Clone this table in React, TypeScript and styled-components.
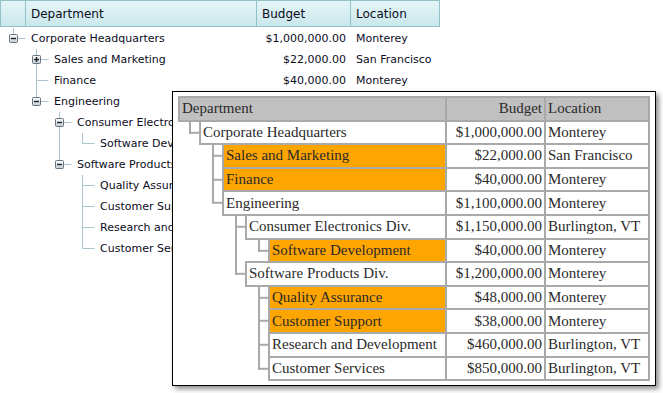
import React from "react";
import styled, { createGlobalStyle } from "styled-components";

const GlobalStyle = createGlobalStyle`
  html, body {
    margin: 0;
    padding: 0;
    background: #ffffff;
  }
  body {
    width: 663px;
    height: 393px;
    overflow: hidden;
    font-family: "DejaVu Sans", Verdana, sans-serif;
  }
`;

type Guide = "none" | "pass" | "tee" | "elbow";

interface Dept {
  name: string;
  budget: string;
  location: string;
  level: number;
  guides: Guide[];
  expander?: "plus" | "minus";
  highlight?: boolean;
}

const rows: Dept[] = [
  { name: "Corporate Headquarters", budget: "$1,000,000.00", location: "Monterey", level: 0, guides: ["elbow"], expander: "minus" },
  { name: "Sales and Marketing", budget: "$22,000.00", location: "San Francisco", level: 1, guides: ["none", "tee"], expander: "plus", highlight: true },
  { name: "Finance", budget: "$40,000.00", location: "Monterey", level: 1, guides: ["none", "tee"], highlight: true },
  { name: "Engineering", budget: "$1,100,000.00", location: "Monterey", level: 1, guides: ["none", "elbow"], expander: "minus" },
  { name: "Consumer Electronics Div.", budget: "$1,150,000.00", location: "Burlington, VT", level: 2, guides: ["none", "none", "tee"], expander: "minus" },
  { name: "Software Development", budget: "$40,000.00", location: "Monterey", level: 3, guides: ["none", "none", "pass", "elbow"], highlight: true },
  { name: "Software Products Div.", budget: "$1,200,000.00", location: "Monterey", level: 2, guides: ["none", "none", "elbow"], expander: "minus" },
  { name: "Quality Assurance", budget: "$48,000.00", location: "Monterey", level: 3, guides: ["none", "none", "none", "tee"], highlight: true },
  { name: "Customer Support", budget: "$38,000.00", location: "Monterey", level: 3, guides: ["none", "none", "none", "tee"], highlight: true },
  { name: "Research and Development", budget: "$460,000.00", location: "Burlington, VT", level: 3, guides: ["none", "none", "none", "tee"] },
  { name: "Customer Services", budget: "$850,000.00", location: "Burlington, VT", level: 3, guides: ["none", "none", "none", "elbow"] },
];

/* ---------- background tree grid ---------- */

const Page = styled.div`
  position: relative;
  width: 663px;
  height: 393px;
`;

const Grid = styled.div`
  width: 440px;
  color: #0c0c1c;
  font-size: 11px;
`;

const GridHeader = styled.div`
  display: flex;
  height: 27px;
  box-sizing: border-box;
  border: 1px solid #92c2c8;
  background: linear-gradient(#e6f5f7, #c9e7eb);
`;

const HeaderCell = styled.div<{ $width?: number }>`
  display: flex;
  align-items: center;
  box-sizing: border-box;
  ${(p) => (p.$width ? `width: ${p.$width}px;` : "flex: 1;")}
  padding: 1px 0 0 5px;
  border-right: 1px solid #92c2c8;
  font-size: 12px;
  &:last-child {
    border-right: 0;
  }
`;

const GridBody = styled.div`
  padding-top: 1px;
`;

const GridRow = styled.div`
  display: flex;
  align-items: center;
  height: 21px;
`;

const TreeCell = styled.div`
  display: flex;
  align-items: center;
  width: 256px;
  height: 100%;
  white-space: nowrap;
  overflow: hidden;
`;

const BudgetCell = styled.div`
  width: 94px;
  box-sizing: border-box;
  padding-right: 4px;
  text-align: right;
  white-space: nowrap;
`;

const LocationCell = styled.div`
  flex: 1;
  padding-left: 6px;
  white-space: nowrap;
`;

const TREE_LINE = "#a9c6ce";

function Expander({ cx, cy, kind }: { cx: number; cy: number; kind: "plus" | "minus" }) {
  const id = `exp-${kind}`;
  return (
    <g>
      <defs>
        <linearGradient id={id} x1="0" y1="0" x2="0" y2="1">
          <stop offset="0" stopColor="#ffffff" />
          <stop offset="1" stopColor="#c3ccd4" />
        </linearGradient>
      </defs>
      <rect x={cx - 4} y={cy - 4} width={8} height={8} rx={1} fill={`url(#${id})`} stroke="#66727e" strokeWidth={1} />
      <line x1={cx - 2.5} y1={cy} x2={cx + 2.5} y2={cy} stroke="#1f2328" strokeWidth={1.4} />
      {kind === "plus" && <line x1={cx} y1={cy - 2.5} x2={cx} y2={cy + 2.5} stroke="#1f2328" strokeWidth={1.4} />}
    </g>
  );
}

function GridGutter({ row }: { row: Dept }) {
  const w = 31 + 23 * row.level;
  const mid = 10.5;
  return (
    <svg width={w} height={21} style={{ flexShrink: 0 }}>
      {row.guides.map((g, i) => {
        const cx = 13.5 + 23 * i;
        if (g === "none") return null;
        return (
          <g key={i} stroke={TREE_LINE} strokeWidth={1} fill="none">
            <line x1={cx} y1={g === "elbow" && row.level === 0 ? -1 : 0} x2={cx} y2={g === "elbow" ? mid : 21} />
            {g !== "pass" && <line x1={cx} y1={mid} x2={cx + 12} y2={mid} />}
          </g>
        );
      })}
      {row.expander && <Expander cx={13.5 + 23 * row.level} cy={mid} kind={row.expander} />}
    </svg>
  );
}

/* ---------- popup (printed view) ---------- */

const ROW_H = 25.6;
const P_LINE = "#a9a9a9";

const Popup = styled.div`
  position: absolute;
  left: 172px;
  top: 91px;
  width: 472px;
  padding: 4px 5px;
  border: 1px solid #000;
  background: #fff;
  box-shadow: 3px 3px 5px rgba(0, 0, 0, 0.45);
  font-family: "Liberation Serif", "Times New Roman", serif;
  font-size: 15px;
  color: #2a2a2a;
`;

const PRow = styled.div`
  display: flex;
  height: ${ROW_H}px;
  & + & {
    margin-top: -2px;
  }
`;

const PCell = styled.div<{ $bg?: string; $width?: number; $right?: boolean }>`
  display: flex;
  align-items: center;
  box-sizing: border-box;
  height: 100%;
  ${(p) => (p.$width ? `width: ${p.$width}px; margin-left: -2px;` : "flex: 1; min-width: 0;")}
  justify-content: ${(p) => (p.$right ? "flex-end" : "flex-start")};
  padding: 0 2px;
  border: 2px solid ${P_LINE};
  background: ${(p) => p.$bg || "#fff"};
  white-space: nowrap;
  overflow: hidden;
`;

function PopupGutter({ row }: { row: Dept }) {
  const w = 21 + 23 * row.level;
  const mid = ROW_H / 2;
  return (
    <svg width={w} height={ROW_H} style={{ flexShrink: 0 }}>
      {row.guides.map((g, i) => {
        const cx = 12 + 23 * i;
        if (g === "none") return null;
        return (
          <g key={i} stroke={P_LINE} strokeWidth={2} fill="none">
            <line x1={cx} y1={0} x2={cx} y2={g === "elbow" ? mid + 1 : ROW_H} />
            {g !== "pass" && <line x1={cx - 1} y1={mid} x2={w} y2={mid} />}
          </g>
        );
      })}
    </svg>
  );
}

export default function App() {
  return (
    <Page>
      <GlobalStyle />
      <Grid>
        <GridHeader>
          <HeaderCell $width={25} />
          <HeaderCell $width={231}>Department</HeaderCell>
          <HeaderCell $width={94}>Budget</HeaderCell>
          <HeaderCell>Location</HeaderCell>
        </GridHeader>
        <GridBody>
          {rows.map((r) => (
            <GridRow key={r.name}>
              <TreeCell>
                <GridGutter row={r} />
                <span>{r.name}</span>
              </TreeCell>
              <BudgetCell>{r.budget}</BudgetCell>
              <LocationCell>{r.location}</LocationCell>
            </GridRow>
          ))}
        </GridBody>
      </Grid>

      <Popup>
        <PRow>
          <PCell $bg="#c0c0c0">Department</PCell>
          <PCell $bg="#c0c0c0" $width={101} $right>Budget</PCell>
          <PCell $bg="#c0c0c0" $width={106}>Location</PCell>
        </PRow>
        {rows.map((r) => (
          <PRow key={r.name}>
            <PopupGutter row={r} />
            <PCell $bg={r.highlight ? "#ffa500" : "#fff"}>{r.name}</PCell>
            <PCell $width={101} $right>{r.budget}</PCell>
            <PCell $width={106}>{r.location}</PCell>
          </PRow>
        ))}
      </Popup>
    </Page>
  );
}
